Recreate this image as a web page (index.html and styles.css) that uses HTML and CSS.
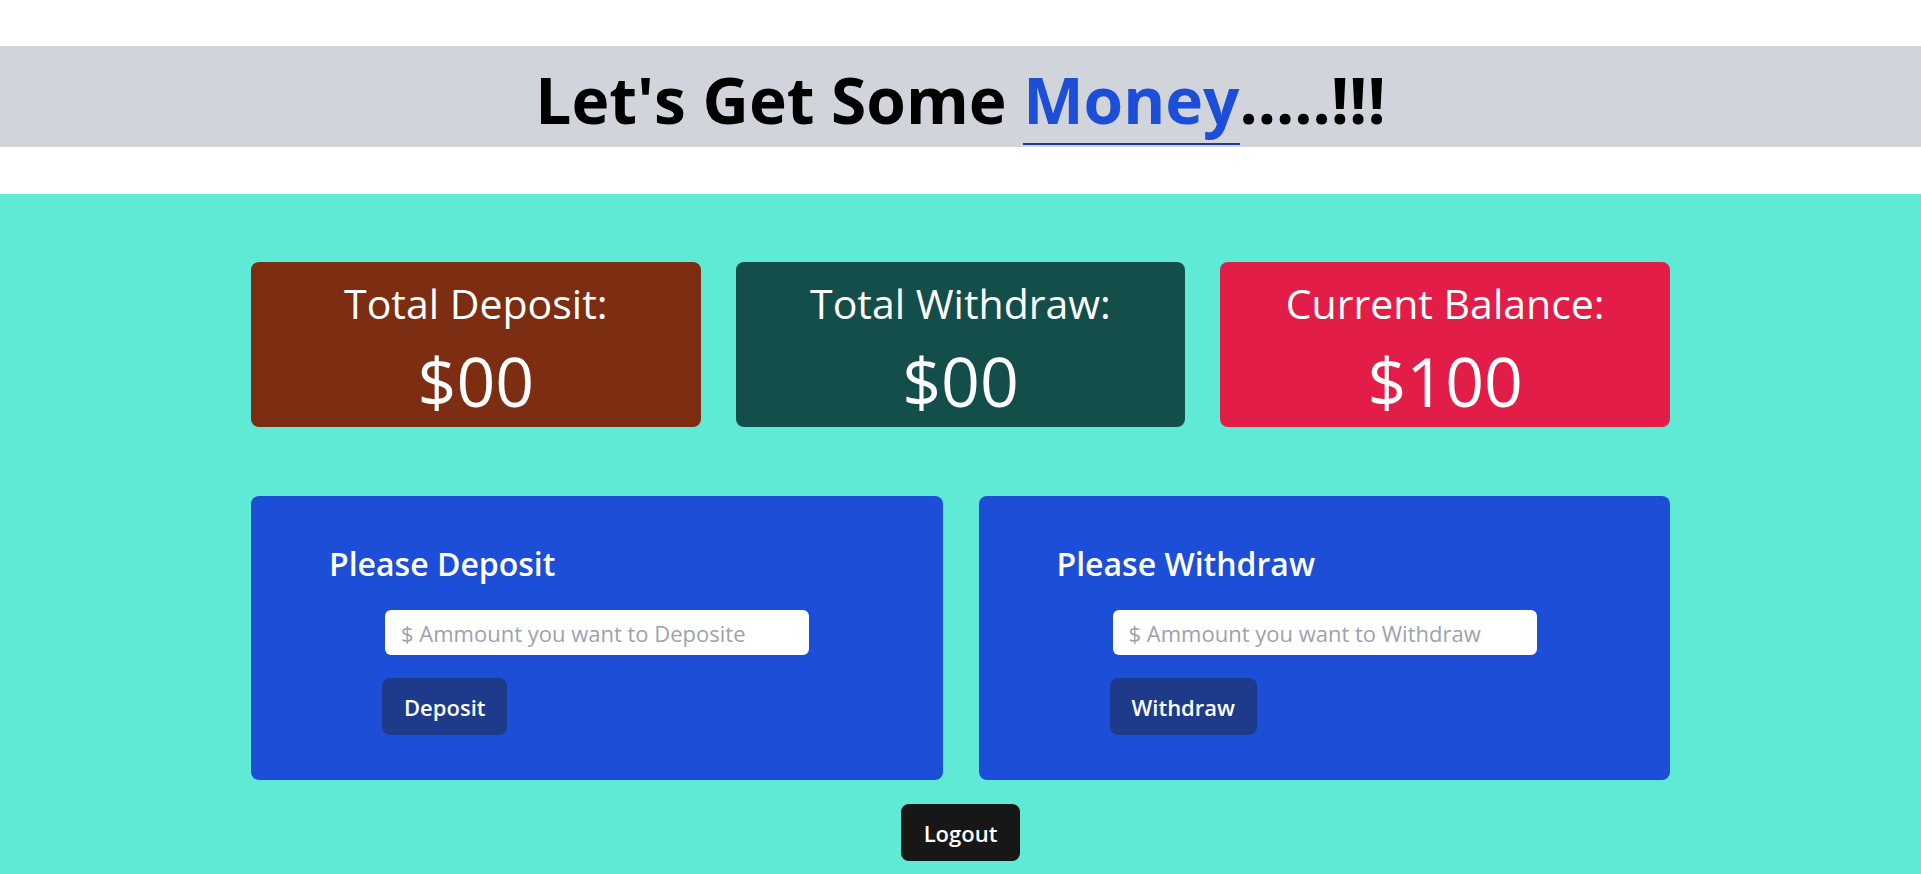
FILE: index.html
```html
<!DOCTYPE html>
<html lang="en">
<head>
<meta charset="utf-8">
<title>Bank</title>
<link rel="stylesheet" href="styles.css">
</head>
<body>
  <header class="top">
    <h1 class="title">Let's Get Some <span class="money">Money</span>.....!!!</h1>
  </header>
  <main class="main">
    <section class="stats">
      <div class="stat stat-deposit">
        <h2 class="stat-label">Total Deposit:</h2>
        <p class="stat-value">$00</p>
      </div>
      <div class="stat stat-withdraw">
        <h2 class="stat-label">Total Withdraw:</h2>
        <p class="stat-value">$00</p>
      </div>
      <div class="stat stat-balance">
        <h2 class="stat-label">Current Balance:</h2>
        <p class="stat-value">$100</p>
      </div>
    </section>
    <section class="forms">
      <div class="panel">
        <h3 class="panel-title">Please Deposit</h3>
        <input class="amount" type="text" placeholder="$ Ammount you want to Deposite">
        <button class="btn btn-action" type="button">Deposit</button>
      </div>
      <div class="panel">
        <h3 class="panel-title">Please Withdraw</h3>
        <input class="amount" type="text" placeholder="$ Ammount you want to Withdraw">
        <button class="btn btn-action" type="button">Withdraw</button>
      </div>
    </section>
    <div class="logout-row">
      <button class="btn btn-logout" type="button">Logout</button>
    </div>
  </main>
</body>
</html>
```

FILE: styles.css
```css
* { box-sizing: border-box; }

html, body {
  margin: 0;
  padding: 0;
  background: #ffffff;
  font-family: "Open Sans", "Noto Sans", sans-serif;
}

.top {
  padding: 46px 0 47px;
  background: #ffffff;
}

.title {
  margin: 0;
  height: 101px;
  padding-top: 22px;
  background: #d1d5db;
  text-align: center;
  font-size: 64px;
  line-height: 1;
  font-weight: 700;
  color: #000000;
}

.money {
  color: #1d4ed8;
  border-bottom: 2px solid #1e3a8a;
}

.main {
  background: #5eead4;
  padding: 68px 0 30px;
}

.stats {
  width: 1419px;
  margin: 0 auto;
  display: grid;
  grid-template-columns: repeat(3, 1fr);
  column-gap: 35px;
}

.stat {
  height: 165px;
  border-radius: 8px;
  padding-top: 21px;
  display: flex;
  flex-direction: column;
  align-items: center;
  color: #ffffff;
}

.stat-deposit { background: #7c2d12; }
.stat-withdraw { background: #134e4a; }
.stat-balance { background: #e11d48; }

.stat-label {
  margin: 0;
  font-size: 41px;
  line-height: 1;
  font-weight: 400;
}

.stat-value {
  margin: 23px 0 0;
  font-size: 68px;
  line-height: 1;
  font-weight: 400;
}

.forms {
  width: 1419px;
  margin: 69px auto 0;
  display: grid;
  grid-template-columns: repeat(2, 1fr);
  column-gap: 36px;
}

.panel {
  height: 284px;
  background: #1d4ed8;
  border-radius: 8px;
  padding: 52px 0 0 78px;
  display: flex;
  flex-direction: column;
  align-items: flex-start;
}

.panel-title {
  margin: 0;
  font-size: 32px;
  line-height: 1;
  font-weight: 600;
  color: #ffffff;
}

.amount {
  margin: 30px 0 0 56px;
  width: 424px;
  height: 45px;
  border: none;
  border-radius: 6px;
  background: #ffffff;
  padding: 0 16px;
  font-family: "Open Sans", "Noto Sans", sans-serif;
  font-size: 22px;
  color: #111827;
  outline: none;
}

.amount::placeholder {
  color: #9ca3af;
  opacity: 1;
}

.btn {
  height: 57px;
  padding: 0 22px;
  border: none;
  border-radius: 8px;
  color: #ffffff;
  font-family: "Open Sans", "Noto Sans", sans-serif;
  font-size: 22px;
  font-weight: 600;
  cursor: pointer;
}

.btn-action {
  margin: 23px 0 0 53px;
  background: #1e3a8a;
}

.logout-row {
  display: flex;
  justify-content: center;
  margin-top: 24px;
}

.btn-logout {
  background: #171717;
  padding: 0 23px;
}
```
